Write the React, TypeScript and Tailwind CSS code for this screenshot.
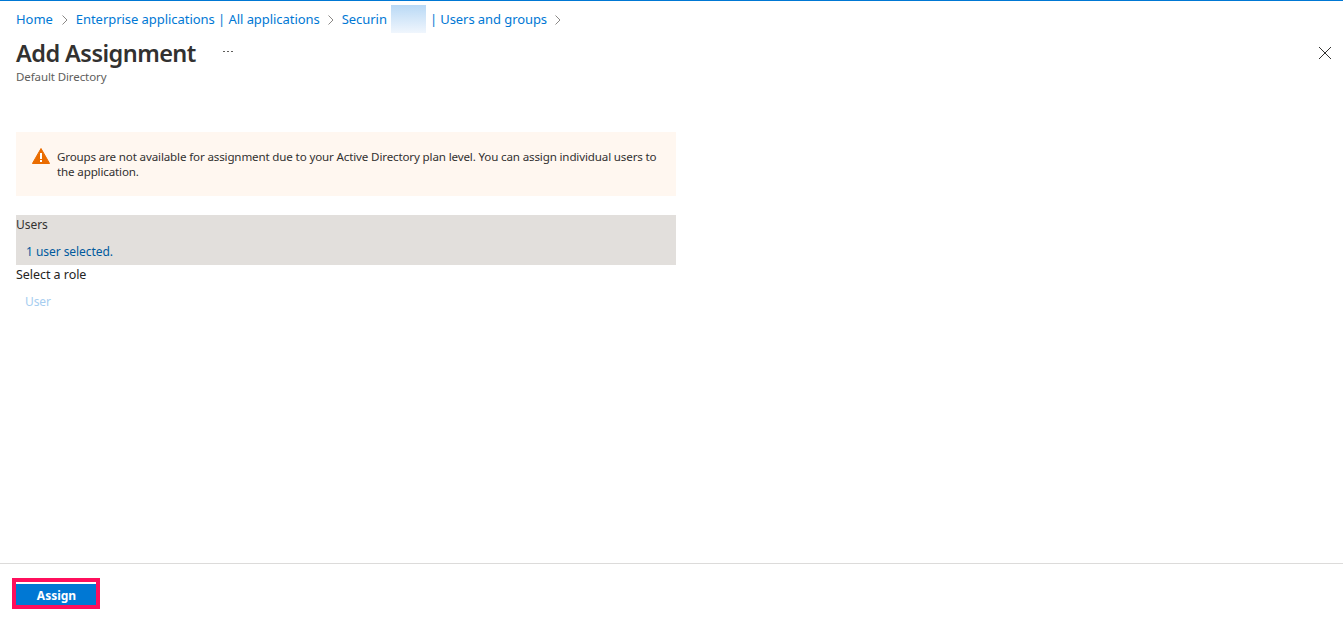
import React from "react";

const Chevron = () => (
  <svg width="8" height="12" viewBox="0 0 8 12" className="mx-[7px] shrink-0" fill="none" stroke="#8a8886" strokeWidth="1">
    <path d="M1.5 1.5 6 6l-4.5 4.5" />
  </svg>
);

export default function App() {
  return (
    <div className="flex h-[621px] w-[1343px] flex-col overflow-hidden border-t border-[#0078d4] bg-white font-['Noto_Sans',sans-serif] text-[12.5px] text-[#323130]">
      <div className="flex-1 px-4">
        <nav className="flex h-[36px] items-center pt-[1px] text-[13px] tracking-[-0.05px] text-[#0078d4]">
          <span className="mr-[1px]">Home</span>
          <Chevron />
          <span>Enterprise applications | All applications</span>
          <Chevron />
          <span>Securin</span>
          <div className="ml-[4px] mr-[4px] mb-[1px] h-[28px] w-[35px] bg-gradient-to-b from-[#b9d9f5] to-[#f0f6fd]" />
          <span className="tracking-[-0.08px]">| Users and groups</span>
          <Chevron />
        </nav>
        <div className="flex items-start justify-between">
          <div className="flex items-center">
            <h1 className="text-[23.5px] leading-[32px] font-semibold tracking-[-0.55px] text-[#323130]">Add Assignment</h1>
            <span className="ml-[27px] mb-[3px] flex gap-[2px]">
              <i className="h-[1px] w-[2px] bg-[#605e5c]" />
              <i className="h-[1px] w-[2px] bg-[#605e5c]" />
              <i className="h-[1px] w-[2px] bg-[#605e5c]" />
            </span>
          </div>
          <svg width="14" height="14" viewBox="0 0 14 14" className="mt-[9px] mr-[-5px]" fill="none" stroke="#323130" strokeWidth="1">
            <path d="M1 1l12 12M13 1 1 13" />
          </svg>
        </div>
        <p className="text-[11.5px] leading-[15px] tracking-[-0.1px] text-[#605e5c]">Default Directory</p>

        <div className="mt-[48px] flex h-[64px] w-[660px] items-center bg-[#fff7f0] pl-[16px] pr-[16px]">
          <svg width="18" height="16" viewBox="0 0 18 16" className="mt-[-16px] mr-[7px] shrink-0">
            <path d="M9 .5 17.6 15.5H.4Z" fill="#ea6c00" stroke="#ea6c00" strokeLinejoin="round" />
            <rect x="8" y="5" width="2" height="6" fill="#fff" />
            <rect x="8" y="12" width="2" height="2" fill="#fff" />
          </svg>
          <p className="leading-[15px] tracking-[-0.15px] text-[11.6px]">
            Groups are not available for assignment due to your Active Directory plan level. You can assign individual users to the application.
          </p>
        </div>

        <div className="mt-[19px] h-[50px] w-[660px] bg-[#e2dfdc] text-[12px] tracking-[-0.05px]">
          <div className="h-[20px] leading-[19px] text-[#323130]">Users</div>
          <div className="pl-[10px] pt-[9px] leading-[16px] text-[#005a9e]">1 user selected.</div>
        </div>
        <div className="mt-[1px] h-[19px] text-[12.5px] leading-[18px] tracking-[-0.05px] text-[#252423]">Select a role</div>
        <div className="pl-[9px] pt-[9px] text-[12px] leading-[16px] tracking-[-0.1px] text-[#a6cdf0]">User</div>
      </div>

      <footer className="h-[58px] border-t border-[#dcdbda] pl-3 pt-[14px]">
        <div className="h-[31px] w-[88px] border-[4px] border-[#ff0f5c] bg-white pt-[2px]">
          <button className="block h-[21px] w-full bg-[#0078d4] pt-[1px] pl-[1px] text-[12px] leading-[21px] font-bold text-white">Assign</button>
        </div>
      </footer>
    </div>
  );
}
